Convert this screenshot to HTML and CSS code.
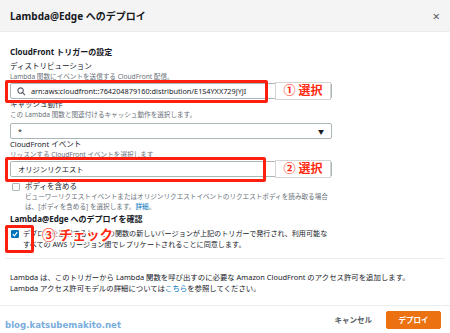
FILE: index.html
```html
<!DOCTYPE html>
<html lang="ja">
<head>
    <meta charset="UTF-8">
    <meta name="viewport" content="width=device-width, initial-scale=1.0">
    <title>Lambda@Edge へのデプロイ</title>
    <link rel="stylesheet" href="styles.css">
</head>
<body>
    <div class="modal">
        <header class="modal-header">
            <h2>Lambda@Edge へのデプロイ</h2>
            <span class="close">×</span>
        </header>

        <div class="modal-body">
            <!-- Trigger settings -->
            <h3 class="group-title">CloudFront トリガーの設定</h3>

            <div class="label">ディストリビューション</div>
            <div class="hint">Lambda 関数にイベントを送信する CloudFront 配信。</div>
            <div class="input search">
                <svg width="9" height="9" viewBox="0 0 10 10">
                    <circle cx="4" cy="4" r="3" fill="none" stroke="#545b64" stroke-width="1.2"/>
                    <line x1="6.2" y1="6.2" x2="9" y2="9" stroke="#545b64" stroke-width="1.3"/>
                </svg>
                <span>arn:aws:cloudfront::764204879160:distribution/E1S4YXX729JYJI</span>
            </div>

            <div class="label">キャッシュ動作</div>
            <div class="hint">この Lambda 関数と関連付けるキャッシュ動作を選択します。</div>
            <div class="input select">
                <span>*</span>
                <span class="caret">▼</span>
            </div>

            <div class="label">CloudFront イベント</div>
            <div class="hint">リッスンする CloudFront イベントを選択します</div>
            <div class="input">オリジンリクエスト</div>

            <div class="check-row">
                <span class="checkbox"></span>
                <div>
                    <div class="label">ボディを含める</div>
                    <div class="hint">ビューワーリクエストイベントまたはオリジンリクエストイベントのリクエストボディを読み取る場合<br>は、[ボディを含める] を選択します。<a>詳細</a>。</div>
                </div>
            </div>

            <!-- Confirm -->
            <h3 class="group-title confirm">Lambda@Edge へのデプロイを確認</h3>
            <div class="check-row agree">
                <span class="checkbox checked">
                    <svg width="6" height="6" viewBox="0 0 8 8">
                        <polyline points="1,4.2 3.2,6.4 7,1.6" fill="none" stroke="#fff" stroke-width="1.6"/>
                    </svg>
                </span>
                <div class="text">デプロイを選択すると、この関数の新しいバージョンが上記のトリガーで発行され、利用可能な<br>すべての AWS リージョン間でレプリケートされることに同意します。</div>
            </div>

            <div class="divider"></div>

            <p class="note">Lambda は、このトリガーから Lambda 関数を呼び出すのに必要な Amazon CloudFront のアクセス許可を追加します。<br>Lambda アクセス許可モデルの詳細については<a>こちら</a>を参照してください。</p>
        </div>

        <footer class="modal-footer">
            <span class="watermark">blog.katsubemakito.net</span>
            <button class="btn-link">キャンセル</button>
            <button class="btn-primary">デプロイ</button>
        </footer>

        <!-- Annotations drawn over the screenshot -->
        <div class="mark mark-1"></div>
        <div class="tag tag-1">① 選択</div>
        <div class="mark mark-2"></div>
        <div class="tag tag-2">② 選択</div>
        <div class="mark mark-3"></div>
        <div class="note-check">③ チェック</div>
    </div>
</body>
</html>
```

FILE: styles.css
```css
* {
    box-sizing: border-box;
}

body {
    margin: 0;
    font-family: "Noto Sans", "Noto Sans CJK JP", sans-serif;
    color: #16191f;
    background-color: #fff;
}

.modal {
    position: relative;
    width: 450px;
    height: 333px;
    overflow: hidden;
}

.modal-header {
    height: 32px;
    display: flex;
    align-items: center;
    justify-content: space-between;
    padding: 0 10px;
    background-color: #f4f4f4;
    border-bottom: 1px solid #eaeded;
}

.modal-header h2 {
    margin: 0;
    font-size: 10px;
    font-weight: bold;
}

.close {
    font-size: 13px;
    color: #545b64;
}

.modal-body {
    padding: 0 10px;
}

.group-title {
    margin: 14px 0 0;
    font-size: 8px;
    line-height: 12px;
    font-weight: bold;
}

.group-title.confirm {
    margin-top: 1px;
}

.label {
    margin-top: 3px;
    font-size: 7.5px;
    line-height: 11px;
}

.input + .label {
    margin-top: 0;
}

.hint {
    font-size: 6.6px;
    line-height: 10px;
    color: #687078;
}

.hint a, .note a {
    color: #0073bb;
}

.input {
    width: 322px;
    height: 16px;
    margin-top: 1px;
    display: flex;
    align-items: center;
    gap: 5px;
    padding: 0 7px;
    border: 1px solid #aab7b8;
    border-radius: 2px;
    font-size: 7.3px;
}

.input.search {
    padding-left: 6px;
    overflow: hidden;
    white-space: nowrap;
}

.input.select {
    margin-top: 3px;
    justify-content: space-between;
}

.caret {
    font-size: 6px;
    color: #16191f;
}

.check-row {
    display: flex;
    gap: 5px;
    margin-top: 4px;
    padding-left: 2px;
}

.check-row .label {
    margin-top: 0;
}

.checkbox {
    flex: none;
    width: 8px;
    height: 8px;
    margin-top: 2px;
    border: 1px solid #aab7b8;
    border-radius: 1px;
    display: flex;
    align-items: center;
    justify-content: center;
}

.checkbox.checked {
    background-color: #0073bb;
    border-color: #0073bb;
}

.agree {
    margin-top: 3px;
    padding-left: 1px;
    gap: 4px;
}

.agree .text {
    font-size: 7.1px;
    line-height: 11px;
}

.divider {
    margin: 8px -5px 0;
    border-top: 1px solid #eaeded;
}

.note {
    margin: 13px 0 0;
    font-size: 7.4px;
    line-height: 11px;
}

.modal-footer {
    position: absolute;
    left: 0;
    right: 0;
    top: 305px;
    bottom: 0;
    display: flex;
    align-items: center;
    justify-content: flex-end;
    gap: 14px;
    padding: 0 9px 0 5px;
    border-top: 1px solid #eaeded;
}

.watermark {
    margin-right: auto;
    margin-top: 10px;
    font-family: "DejaVu Sans", sans-serif;
    font-size: 8.6px;
    font-weight: bold;
    color: #7aaddd;
}

.modal-footer button {
    font-family: inherit;
    font-size: 7.5px;
    font-weight: bold;
    cursor: pointer;
}

.btn-link {
    border: none;
    background: none;
    color: #545b64;
    padding: 0;
}

.btn-primary {
    width: 55px;
    height: 18px;
    border: 1px solid #ec7211;
    border-radius: 2px;
    background-color: #ec7211;
    color: #fff;
}

/* annotations */
.mark {
    position: absolute;
    border: 3px solid #ff1f0f;
    border-radius: 2px;
}

.mark-1 { left: 5px; top: 80px; width: 263px; height: 23px; }
.mark-2 { left: 5px; top: 157px; width: 261px; height: 25px; }
.mark-3 { left: 5px; top: 225px; width: 29px; height: 28px; }

.tag {
    position: absolute;
    left: 275px;
    width: 56px;
    height: 18px;
    background-color: #fff;
    border: 1px solid #d5d5d5;
    color: #ff2a10;
    font-size: 12px;
    line-height: 16px;
    font-weight: bold;
    text-align: center;
    white-space: nowrap;
    text-shadow: 1px 0 #fff, -1px 0 #fff, 0 1px #fff, 0 -1px #fff;
}

.tag-1 { top: 82px; }
.tag-2 { top: 160px; }

.note-check {
    position: absolute;
    left: 42px;
    top: 226px;
    color: #ff2a10;
    font-size: 13.5px;
    line-height: 18px;
    font-weight: bold;
    white-space: nowrap;
    text-shadow: 1px 0 #fff, -1px 0 #fff, 0 1px #fff, 0 -1px #fff, 1px 1px #fff, -1px -1px #fff;
}
```
